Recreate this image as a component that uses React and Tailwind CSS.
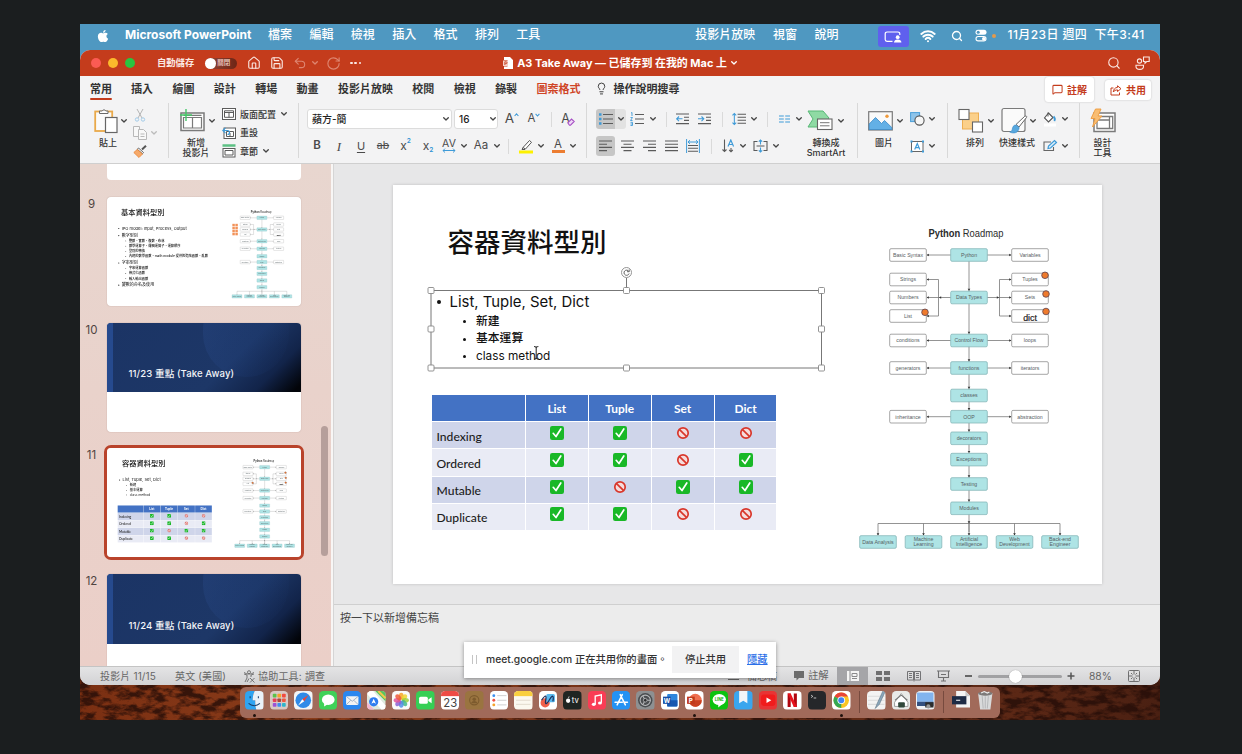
import React from 'react';
import { Wifi, Search, House, Save, Undo2, RotateCw, Lightbulb, MessageSquare } from 'lucide-react';
import { FaApple } from 'react-icons/fa';

const BLUE = '#3f9bd8';
const GREY = '#5b5b5b';

function Chev({ className = 'text-[#444]' }) {
  return (
    <svg width="6" height="4" viewBox="0 0 6 4" className={'shrink-0 ' + className}>
      <path d="M.7.7 3 3 5.3.7" fill="none" stroke="currentColor" strokeWidth="1.3" strokeLinecap="round" strokeLinejoin="round" />
    </svg>
  );
}

function Cell({ className = '', children }) {
  return <div className={'flex h-5 shrink-0 items-center justify-center ' + className}>{children}</div>;
}

const Rule = () => <div className="h-[15px] w-px bg-[#dadada]" />;
const GroupRule = () => <div className="mt-px h-[55px] w-px shrink-0 bg-[#d8d8d8]" />;

/* ---------- menu bar ---------- */

function MenuBar() {
  return (
    <div className="relative flex h-[25px] shrink-0 items-center bg-[#4f98c1] text-[12px] font-medium leading-none text-white">
      <FaApple className="ml-[16px] mt-[-2px] size-[14px]" />
      <span className="ml-[15px] w-[143px] whitespace-nowrap pb-[3px] text-[12px] font-bold">Microsoft PowerPoint</span>
      <div className="flex gap-[17.4px] pb-[3px]">
        {['檔案', '編輯', '檢視', '插入', '格式', '排列', '工具'].map((t) => (
          <span key={t} className="w-6 whitespace-nowrap">{t}</span>
        ))}
      </div>
      <div className="ml-[155px] flex gap-[17.6px] whitespace-nowrap pb-[3px]">
        <span>投影片放映</span>
        <span>視窗</span>
        <span>說明</span>
      </div>
      <div className="ml-[39px] flex h-[21px] w-[31px] items-center justify-center rounded-[3px] bg-[#5f60ee]">
        <svg width="18" height="12" viewBox="0 0 18 12">
          <path d="M8.5 10.3H3A1.8 1.8 0 0 1 1.2 8.500V2.800A1.800 1.800 0 0 1 3 1h11a1.800 1.800 0 0 1 1.800 1.800V4" fill="none" stroke="#fff" strokeWidth="1.200" />
          <circle cx="13.700" cy="6.200" r="1.900" fill="#fff" />
          <path d="M10 11.500c0-2 1.600-3 3.700-3s3.700 1 3.700 3z" fill="#fff" />
        </svg>
      </div>
      <Wifi className="ml-[11px] mt-[-2px] size-[16px]" strokeWidth={3} />
      <Search className="ml-[15px] mt-[-2px] size-[12px]" strokeWidth={2.6} />
      <svg width="12" height="13" viewBox="0 0 12 13" className="ml-[12px] mt-[-2px]">
        <rect x=".5" y=".8" width="11" height="5" rx="2.500" fill="#fff" />
        <circle cx="3.200" cy="3.300" r="1.500" fill="#4f97c1" />
        <rect x="1" y="7.500" width="10" height="4.400" rx="2.200" fill="none" stroke="#fff" strokeWidth="1.100" />
        <circle cx="8.800" cy="9.700" r="1.800" fill="#fff" />
      </svg>
      <div className="ml-[5px] mt-[-2px] size-[4px] rounded-full bg-[#e29a4c]" />
      <span className="ml-[12px] whitespace-nowrap pb-[3px] text-[12px] tracking-[0.4px]">11月23日 週四&nbsp; 下午3:41</span>
    </div>
  );
}

/* ---------- title bar ---------- */

function TitleBar() {
  return (
    <div className="flex h-[26px] shrink-0 items-center bg-[#c43c1c] leading-none text-[#fbe9e4]">
      <div className="ml-[11px] flex gap-[7px]">
        <i className="size-[10px] rounded-full bg-[#fb5b53]" />
        <i className="size-[10px] rounded-full bg-[#fcb92c]" />
        <i className="size-[10px] rounded-full bg-[#29c53f]" />
      </div>
      <span className="ml-[22px] whitespace-nowrap text-[9.3px] font-semibold">自動儲存</span>
      <div className="ml-[11px] flex h-[11px] w-[32px] items-center rounded-full bg-gradient-to-r from-[#94493a] to-[#6f2515]">
        <i className="size-[11px] rounded-full bg-white" />
        <span className="ml-[1px] whitespace-nowrap text-[6.500px] font-medium text-[#f0cfc7]">關閉</span>
      </div>
      <House className="ml-[10px] size-[14px]" strokeWidth={1.9} />
      <Save className="ml-[9px] size-[14px]" strokeWidth={1.9} />
      <Undo2 className="ml-[9px] size-[14px] text-[#de8570]" strokeWidth={1.900} />
      <Chev className="ml-[5px] text-[#de8570]" />
      <RotateCw className="ml-[8px] size-[15px] text-[#de8570]" strokeWidth={1.800} />
      <span className="ml-[9px] flex gap-[1.600px]">
        <i className="size-[2.600px] rounded-full bg-[#fbe9e4]" />
        <i className="size-[2.600px] rounded-full bg-[#fbe9e4]" />
        <i className="size-[2.600px] rounded-full bg-[#fbe9e4]" />
      </span>
      <svg width="10" height="12" viewBox="0 0 10 12" className="ml-[142px]">
        <path d="M2 0h5l3 3v9H1V9.500h3.500V3H1V0z" fill="#fff" />
        <path d="M0 3.500h5v5.500H0z" fill="#f6d3ca" />
        <path d="M1.800 8V4.800h1.300a.9.9 0 0 1 0 1.900H2" fill="none" stroke="#c43c1c" strokeWidth=".8" />
      </svg>
      <span className="ml-[4px] w-[213px] whitespace-nowrap text-[10.950px] font-bold text-white">A3 Take Away — 已儲存到 在我的 Mac 上</span>
      <Chev className="ml-[1px] text-white" />
      <div className="flex-1" />
      <Search className="size-[14px]" strokeWidth={1.900} />
      <svg width="15" height="14" viewBox="0 0 15 14" className="ml-[14px] mr-[10px]" fill="none" stroke="currentColor" strokeWidth="1.100">
        <circle cx="4.500" cy="5" r="2.100" />
        <path d="M1 9.200h7.500v1.300c0 1.700-1.600 2.900-3.700 2.900S1 12.200 1 10.500z" />
        <path d="M8.500 1h5.700v4.500h-2.500L10 7.200V5.500H8.500z" />
      </svg>
    </div>
  );
}

/* ---------- ribbon ---------- */

function Tabs() {
  return (
    <div className="flex h-[26px] shrink-0 items-start text-[11px] font-semibold leading-none text-[#333]">
      <div className="ml-[10px] flex h-[24px] w-[22px] flex-col justify-between whitespace-nowrap pt-[8px]">
        <span>常用</span>
        <i className="h-[2px] w-[22px] rounded bg-[#c43c1c]" />
      </div>
      <div className="ml-[19px] flex gap-[19.400px] whitespace-nowrap pt-[8px]">
        {['插入', '繪圖', '設計', '轉場', '動畫', '投影片放映', '校閱', '檢視', '錄製'].map((t) => <span key={t}>{t}</span>)}
        <span className="text-[#cf4526]">圖案格式</span>
      </div>
      <Lightbulb className="ml-[14px] mt-[6px] size-[13px]" strokeWidth={1.700} />
      <span className="ml-[6px] whitespace-nowrap pt-[8px]">操作說明搜尋</span>
      <div className="flex-1" />
      <div className="mt-px flex h-[25px] w-[49px] items-center justify-center gap-[4px] rounded-[3px] bg-white text-[10px] text-[#c43c1c] shadow-[0_0_2px_rgba(0,0,0,.22)]">
        <MessageSquare className="size-[11px]" strokeWidth={2.200} />
        註解
      </div>
      <div className="ml-[11px] mr-[9px] mt-[4px] flex h-[20px] w-[46px] items-center justify-center gap-[4px] rounded-[3px] bg-white text-[10px] text-[#c43c1c] shadow-[0_0_2px_rgba(0,0,0,.22)]">
        <svg width="12" height="11" viewBox="0 0 12 11" fill="none" stroke="currentColor" strokeWidth="1" strokeLinejoin="round">
          <path d="M3.500 3H1v7h8.500V7.500" />
          <path d="M7.500.8 11 3.700 7.500 6.500V4.900C5.500 4.900 4.300 5.600 3.300 7c.2-2.500 1.500-4.400 4.200-4.600z" />
        </svg>
        共用
      </div>
    </div>
  );
}

function BigButton({ icon, chevron = true, lines, className, rowClass = '', labelClass }) {
  return (
    <div className={'shrink-0 ' + className}>
      <div className={'flex h-[37px] items-center justify-between ' + rowClass}>
        {icon}
        {chevron && <Chev />}
      </div>
      <div className={'-mt-px whitespace-nowrap text-center text-[9px] font-medium leading-[10px] text-[#333] ' + labelClass}>
        {lines.map((l) => <div key={l}>{l}</div>)}
      </div>
    </div>
  );
}

const PasteIcon = () => (
  <svg width="24" height="27" viewBox="0 0 24 27" className="mr-[-1px]">
    <rect x="1.200" y="4.500" width="17" height="19.500" fill="#fbfbfb" stroke="#e9a94a" strokeWidth="1.800" />
    <path d="M5.500 6.500V4h2.700a2 2 0 0 1 3.600 0H14v2.500z" fill="#fff" stroke="#6a6a6a" />
    <rect x="11.500" y="10.500" width="11.500" height="15" fill="#fff" stroke="#666" strokeWidth="1.200" />
  </svg>
);
const NewSlideIcon = () => (
  <svg width="25" height="23" viewBox="0 0 25 23">
    <rect x="1" y="4" width="23" height="17.500" fill="#fff" stroke="#7a7a7a" strokeWidth="1.500" />
    <path d="M3.500 8.500h18v10.500h-18zM12.500 8.500v10.500M3.500 6.300h18" fill="none" stroke="#7a7a7a" strokeWidth="1.200" />
    <path d="M6 0v12M0 6h12" stroke="#44c767" strokeWidth="1.400" />
  </svg>
);
const LayoutIcon = () => (
  <svg width="14" height="12" viewBox="0 0 14 12" fill="none" stroke={GREY} strokeWidth="1"><rect x=".5" y=".5" width="13" height="11" fill="#fff" /><path d="M2.500 2.800h9v6.500h-9zM7 4.500v4.800M2.500 4.500h9" /></svg>
);
const ResetIcon = () => (
  <svg width="14" height="12" viewBox="0 0 14 12" fill="none" stroke={GREY} strokeWidth="1"><rect x="2" y="1" width="11.500" height="10.500" fill="#fff" /><path d="M4.500 4.500h7v5h-7zM8 6v3.500" /><path d="M1 3.500h4.500a2 2 0 0 1 0 4M3.500.8.8 3.500l2.700 2.600" stroke={BLUE} strokeWidth="1.200" /></svg>
);
const SectionIcon = () => (
  <svg width="14" height="14" viewBox="0 0 14 14" fill="none" stroke={GREY} strokeWidth="1"><path d="M.5 1.500h13" stroke="#5cc184" strokeWidth="2.400" /><rect x="1" y="4.500" width="12" height="8.500" fill="#fff" /><path d="M3 6.500h8v4.500H3z" /></svg>
);
const SmartArtIcon = () => (
  <svg width="26" height="22" viewBox="0 0 26 22">
    <path d="M1 1h15l6 7-6 9H1l5-8z" fill="#8fdaa4" stroke="#58b877" />
    <rect x="10.500" y="9" width="14.500" height="10.500" fill="#fff" stroke="#666" strokeWidth="1.100" />
    <path d="M13 12.700h9.500M13 15.800h9.500" stroke="#777" />
  </svg>
);
const PictureIcon = () => (
  <svg width="25" height="20" viewBox="0 0 25 20">
    <rect x=".7" y=".7" width="23.600" height="18.300" fill="#fafafa" stroke="#7a7a7a" strokeWidth="1.200" />
    <path d="M1.200 13 7.500 6.500l6 6L16.500 9.500l7.300 7v2H1.200z" fill="#63b0e6" stroke="#3a89c8" strokeWidth=".8" />
    <circle cx="19" cy="5.300" r="1.700" fill="#f09a3c" />
  </svg>
);
const ArrangeIcon = () => (
  <svg width="26" height="26" viewBox="0 0 26 26">
    <rect x="4.500" y="5" width="16" height="16" fill="#fbd08a" stroke="#edae52" />
    <rect x="1" y="1.500" width="10" height="10" fill="#fff" stroke="#666" strokeWidth="1.100" />
    <rect x="14.500" y="14" width="10" height="10" fill="#fff" stroke="#666" strokeWidth="1.100" />
  </svg>
);
const QuickStyleIcon = () => (
  <svg width="27" height="27" viewBox="0 0 27 27">
    <rect x="1" y="1.500" width="23" height="23" rx="2" fill="#fafafa" stroke="#7a7a7a" strokeWidth="1.200" />
    <path d="M25.500 10.500 18 20l-3-2.500 8.500-8c1.500-1 3 0 2 1z" fill="#fff" stroke="#666" />
    <path d="M15.200 18c-3 0-3.500 2-4 4.500-.3 1.500-1.500 2-2.500 2.500 4 2 9 1 9.500-4.500z" fill="#57a8de" stroke="#3a89c8" strokeWidth=".6" />
  </svg>
);
const DesignIcon = () => (
  <svg width="26" height="26" viewBox="0 0 26 26" className="mr-[-1px] shrink-0">
    <rect x="4" y="5" width="21" height="18.500" fill="#fff" stroke="#7a7a7a" strokeWidth="1.500" />
    <path d="M7 8.500h15M7 12v8.500h12.500V12zM19.500 8.500v12h3.200v-12z" fill="none" stroke="#7a7a7a" strokeWidth="1.300" />
    <path d="M5.500 1h5.500L8 8h4L2.500 19l2.500-8.500H1z" fill="#f9bd72" stroke="#ee9b3c" strokeWidth=".9" />
  </svg>
);

function Lines({ rows, children, w = 14, h = 14 }) {
  return (
    <svg width={w} height={h} viewBox={`0 0 ${w} ${h}`} fill="none">
      {rows.map(([x1, x2, y], i) => <path key={i} d={`M${x1} ${y}H${x2}`} stroke={GREY} strokeWidth="1.100" />)}
      {children}
    </svg>
  );
}

function Ribbon() {
  return (
    <div className="flex h-[62px] shrink-0 border-b border-[#cfcfcf] leading-none text-[#4a4a4a]">
      <div className="flex w-[88px] shrink-0 pl-[14px]">
        <BigButton icon={<PasteIcon />} lines={['貼上']} className="w-[33px]" labelClass="w-[28px]" />
        <div className="ml-[6px] flex flex-col pt-[4px]">
          <div className="flex h-[18px] items-center">
            <svg width="14" height="13" viewBox="0 0 14 13" fill="none" strokeWidth="1"><path d="M4 0l5 9M10 0 5 9" stroke="#b5b5b5" /><circle cx="4" cy="10.500" r="1.700" stroke="#a3cbe8" /><circle cx="10" cy="10.500" r="1.700" stroke="#a3cbe8" /></svg>
          </div>
          <div className="flex h-[18px] items-center">
            <svg width="14" height="14" viewBox="0 0 14 14" fill="#f8f8f8" stroke="#b8b8b8"><path d="M.5.500h6v10h-6z" /><path d="M5.500 3.500h5l3 3v7h-8zM7.500 8h4M7.500 10.500h4" /></svg>
            <span className="flex w-[14px] justify-center"><Chev className="text-[#bbb]" /></span>
          </div>
          <div className="flex h-[18px] items-center">
            <svg width="14" height="13" viewBox="0 0 14 13"><path d="M13 .8 9 4.500" stroke="#555" strokeWidth="2" /><path d="M5.500 3l5 4.500-1 1.200L4.300 4.300z" fill="#fff" stroke="#555" strokeWidth=".9" /><path d="M4.300 4.500 9.500 9 6 12.500.8 7.500z" fill="#f6a96a" stroke="#e88433" strokeWidth=".8" /></svg>
          </div>
        </div>
      </div>
      <GroupRule />
      <div className="flex w-[129px] shrink-0 pl-[11px]">
        <BigButton icon={<NewSlideIcon />} lines={['新增', '投影片']} className="w-[35px]" labelClass="w-[32px]" />
        <div className="ml-[7px] flex flex-col whitespace-nowrap pt-[3px] text-[9px] font-medium text-[#333]">
          <div className="flex h-[18.500px] items-center"><LayoutIcon /><span className="ml-[4px]">版面配置</span><Chev className="ml-[5px] text-[#444]" /></div>
          <div className="flex h-[18.500px] items-center"><ResetIcon /><span className="ml-[4px]">重設</span></div>
          <div className="flex h-[18.500px] items-center"><SectionIcon /><span className="ml-[4px]">章節</span><Chev className="ml-[5px] text-[#444]" /></div>
        </div>
      </div>
      <GroupRule />
      <div className="flex w-[287px] shrink-0 flex-col gap-[7px] pt-[7px]">
        <div className="flex h-5 items-center pl-[8px] text-[#4a4a4a]">
          <div className="flex h-5 w-[145px] items-center justify-between rounded-[3px] border border-[#dcdcdc] bg-white pl-[4px] pr-[2px] text-[10px] font-medium text-[#222]">蘋方-簡<Chev /></div>
          <div className="ml-[2px] flex h-5 w-[44px] items-center justify-between rounded-[3px] border border-[#dcdcdc] bg-white pl-[4px] pr-[1px] text-[10px] font-medium text-[#222]">16<Chev /></div>
          <Cell className="ml-[2px] w-6 text-[13.500px]">A<svg width="5" height="4" viewBox="0 0 5 4" className="mb-[9px]"><path d="M.6 3 2.500.9 4.400 3" fill="none" stroke={BLUE} strokeWidth="1.100" /></svg></Cell>
          <Cell className="w-5 text-[11.500px]">A<svg width="5" height="4" viewBox="0 0 5 4" className="mb-[9px]"><path d="M.6.9 2.500 3 4.400.9" fill="none" stroke={BLUE} strokeWidth="1.100" /></svg></Cell>
          <Cell className="w-[14px]"><Rule /></Cell>
          <Cell className="w-5 text-[12.500px]">A<svg width="8" height="8" viewBox="0 0 8 8" className="-ml-[3px] mt-[6px]"><path d="M.8 4.800 4.500 1l2.700 2.500-3.700 3.700H2.500z" fill="#efd9f7" stroke="#a64fc4" strokeWidth="1.100" /></svg></Cell>
        </div>
        <div className="flex h-5 items-center pl-[7px]">
          <Cell className="w-[22px] text-[11.500px] font-semibold">B</Cell>
          <Cell className="w-[22px] font-['Liberation_Serif',serif] text-[13px] italic">I</Cell>
          <Cell className="w-[22px] text-[11px] underline underline-offset-2">U</Cell>
          <Cell className="w-[22px] text-[10.500px] line-through">ab</Cell>
          <Cell className="w-[23px] text-[12px]">x<span className="mb-[9px] text-[6.500px] font-semibold text-[#2b8fd2]">2</span></Cell>
          <Cell className="w-[22px] text-[12px]">x<span className="mt-[9px] text-[6.500px] font-semibold text-[#2b8fd2]">2</span></Cell>
          <Cell className="w-[20px] flex-col text-[10.500px]">AV<svg width="14" height="5" viewBox="0 0 14 5" className="-mt-px"><path d="M1 2.500h12M3 .6l-2 2 2 1.900M11 .6l2 2-2 1.900" fill="none" stroke={BLUE} /></svg></Cell>
          <Cell className="w-[9px]"><Chev /></Cell>
          <Cell className="w-[26px] text-[11.500px]">Aa</Cell>
          <Cell className="w-[5px]"><Chev /></Cell>
          <Cell className="w-[18px]"><Rule /></Cell>
          <Cell className="w-[18px]">
            <svg width="14" height="15" viewBox="0 0 14 15"><path d="M4 8.500 10.500 1.500l2 1.800L6.500 10zM4 8.500 3 10.500h3" fill="#fff" stroke="#555" /><rect x="0" y="11.500" width="14" height="3" fill="#fdf100" /></svg>
          </Cell>
          <Cell className="w-[12px]"><Chev /></Cell>
          <Cell className="w-[22px] flex-col text-[11.500px] leading-[11px]">A<i className="h-[3px] w-[13px] bg-[#ec7d31]" /></Cell>
          <Cell className="w-[8px]"><Chev /></Cell>
        </div>
      </div>
      <GroupRule />
      <div className="flex w-[270px] shrink-0">
        <div className="flex w-[217px] shrink-0 flex-col gap-[7px] pt-[7px]">
          <div className="flex h-5 items-center pl-[9px]">
            <Cell className="w-[19px] rounded-l-[3px] bg-[#c6c6c6]">
              <Lines rows={[[4, 14, 2.500], [4, 14, 7], [4, 14, 11.500]]}>
                <path d="M0 2.500h2.500M0 7h2.500M0 11.500h2.500" stroke={BLUE} strokeWidth="2.400" />
              </Lines>
            </Cell>
            <Cell className="w-[11px] rounded-r-[3px] bg-[#e2e2e2]"><Chev /></Cell>
            <Cell className="w-[22px]">
              <Lines rows={[[5, 14, 2.500], [5, 14, 7], [5, 14, 11.500]]}>
                <path d="M1 1l1-.5v3.500M.5 5.500h2l-2 3h2M.5 10.300h2v3.200h-2M.5 12h2" stroke={BLUE} strokeWidth=".9" />
              </Lines>
            </Cell>
            <Cell className="w-[10px]"><Chev /></Cell>
            <Cell className="w-[16px]"><Rule /></Cell>
            <Cell className="w-[16px]"><Lines w={13} rows={[[0, 13, 2], [8, 13, 5.200], [8, 13, 8.400], [0, 13, 11.600]]}><path d="M6.500 6.800h-6M3 4.500.700 6.800 3 9.100" stroke={BLUE} strokeWidth="1.100" /></Lines></Cell>
            <Cell className="ml-[6px] w-[16px]"><Lines w={13} rows={[[0, 13, 2], [8, 13, 5.200], [8, 13, 8.400], [0, 13, 11.600]]}><path d="M0 6.800h6M3.500 4.500 5.800 6.800 3.500 9.100" stroke={BLUE} strokeWidth="1.100" /></Lines></Cell>
            <Cell className="w-[20px]"><Rule /></Cell>
            <Cell className="w-[14px]"><Lines w={15} rows={[[6, 15, 2], [6, 15, 5.200], [6, 15, 8.400], [6, 15, 11.600]]}><path d="M2.500 1v12M.5 3.200l2-2.200 2 2.200M.5 10.800l2 2.200 2-2.200" stroke={BLUE} strokeWidth="1.100" /></Lines></Cell>
            <Cell className="w-[16px]"><Chev /></Cell>
            <Cell className="w-[10px]"><Rule /></Cell>
            <Cell className="w-[24px]"><svg width="11" height="8" viewBox="0 0 11 8"><path d="M0 1h4.800M6.200 1H11M0 4h4.800M6.200 4H11M0 7h4.800M6.200 7H11" stroke={BLUE} strokeWidth="1.100" /></svg></Cell>
            <Cell className="w-[6px]"><Chev /></Cell>
          </div>
          <div className="flex h-5 items-center pl-[9px]">
            <Cell className="w-[19px] rounded-[3px] bg-[#c6c6c6]"><Lines w={13} rows={[[0, 13, 2], [0, 8, 5.200], [0, 13, 8.400], [0, 8, 11.600]]} /></Cell>
            <Cell className="ml-px w-[22px]"><Lines w={13} rows={[[0, 13, 2], [2.500, 10.500, 5.200], [0, 13, 8.400], [2.500, 10.500, 11.600]]} /></Cell>
            <Cell className="w-[22px]"><Lines w={13} rows={[[0, 13, 2], [5, 13, 5.200], [0, 13, 8.400], [5, 13, 11.600]]} /></Cell>
            <Cell className="w-[22px]"><Lines w={13} rows={[[0, 13, 2], [0, 13, 5.200], [0, 13, 8.400], [0, 13, 11.600]]} /></Cell>
            <Cell className="w-[22px]"><Lines w={14} rows={[[2, 12, 6.500], [2, 12, 9.300], [2, 12, 12.200]]}><path d="M.6 0v14M13.400 0v14M2 3h10M4 1.200 2 3l2 1.800M10 1.200 12 3l-2 1.800" stroke={BLUE} /></Lines></Cell>
            <Cell className="w-[14px]"><Rule /></Cell>
            <Cell className="w-[20px]">
              <svg width="12" height="14" viewBox="0 0 12 14" fill="none"><path d="M2.500.500v12M.5 10.500l2 2 2-2M9 9v3.500M7.200 11l1.800 1.800L10.800 11" stroke={GREY} strokeWidth="1.100" /><path d="M6 7.500 8.800 1l2.800 6.500M7 5.500h3.600" stroke={BLUE} strokeWidth="1.200" /></svg>
            </Cell>
            <Cell className="w-[10px]"><Chev /></Cell>
            <Cell className="w-[24px]">
              <svg width="15" height="14" viewBox="0 0 15 14" fill="none"><path d="M4.500 2.500H1v9h3.500M10.500 2.500H14v9h-3.500M3.500 7h8" stroke={GREY} strokeWidth="1.100" /><path d="M7.500 1v4.500M5.800 2.700 7.500 1l1.700 1.700M7.500 13V8.500M5.800 11.300 7.500 13l1.700-1.700" stroke={BLUE} strokeWidth="1.100" /></svg>
            </Cell>
            <Cell className="w-[7px]"><Chev /></Cell>
          </div>
        </div>
        <BigButton icon={<SmartArtIcon />} lines={['轉換成', 'SmartArt']} className="w-[40px]" rowClass="pl-[3px]" labelClass="w-[44px]" />
      </div>
      <GroupRule />
      <div className="flex w-[89px] shrink-0 pl-[10px]">
        <BigButton icon={<PictureIcon />} lines={['圖片']} className="w-[35px]" labelClass="w-[32px]" />
        <div className="ml-[7px] flex flex-col gap-[7px] pt-[7px]">
          <div className="flex h-5 items-center">
            <svg width="15" height="14" viewBox="0 0 15 14"><rect x=".6" y=".6" width="9" height="9" fill="#8ec4ea" stroke="#4b9fd9" /><circle cx="9.500" cy="8.500" r="4.600" fill="#f6f6f6" stroke="#555" strokeWidth="1.100" /></svg>
            <Cell className="w-[14px]"><Chev /></Cell>
          </div>
          <div className="flex h-5 items-center">
            <svg width="15" height="13" viewBox="0 0 15 13" fill="none"><rect x="1.500" y="1.500" width="11.500" height="10" fill="#fff" stroke="#666" /><path d="M4.700 9.500 7.300 3.500l2.500 6M5.500 7.600h3.500" stroke={BLUE} strokeWidth="1.200" /><path d="M.5.500h2v2h-2zM12 .5h2v2h-2zM.5 10.500h2v2h-2zM12 10.500h2v2h-2z" fill={BLUE} /></svg>
            <Cell className="w-[14px]"><Chev /></Cell>
          </div>
        </div>
      </div>
      <GroupRule />
      <div className="flex w-[131px] shrink-0 pl-[10px]">
        <BigButton icon={<ArrangeIcon />} lines={['排列']} className="w-[36px]" labelClass="w-[34px]" />
        <BigButton icon={<QuickStyleIcon />} lines={['快速樣式']} className="ml-[5px] w-[37px]" rowClass="pl-[2px]" labelClass="w-[36px]" />
        <div className="ml-[6px] flex flex-col gap-[7px] pt-[7px]">
          <div className="flex h-5 items-center">
            <svg width="16" height="16" viewBox="0 0 16 16"><rect x="2" y="12.500" width="12" height="3" fill="#fff" /><path d="M6.500 2 11 6.500 6.500 11 2.500 7z" fill="#fff" stroke="#555" strokeWidth="1.100" /><path d="M6 1.500v4" stroke="#555" /><path d="M11.500 5.500c1.500 1.500 1.800 3 .8 4.500" fill="none" stroke={BLUE} strokeWidth="1.800" /></svg>
            <Cell className="w-[14px]"><Chev /></Cell>
          </div>
          <div className="flex h-5 items-center">
            <svg width="16" height="14" viewBox="0 0 16 14" fill="none"><path d="M9 3H2v8.500h9.500V8" stroke="#666" strokeWidth="1.100" /><path d="M6 9.500 6.500 7 12.500 1.500l2 2L8.500 9z" fill="#d8ecf9" stroke={BLUE} strokeWidth="1.200" /></svg>
            <Cell className="w-[14px]"><Chev /></Cell>
          </div>
        </div>
      </div>
      <GroupRule />
      <div className="flex pl-[10px]">
        <BigButton icon={<DesignIcon />} chevron={false} lines={['設計', '工具']} className="w-[25px]" labelClass="w-[25px]" />
      </div>
    </div>
  );
}

/* ---------- slide content ---------- */

const SPINE = [
  [255, 'Python'], [297.5, 'Data Types'], [340.500, 'Control Flow'], [368, 'functions'], [395.500, 'classes'], [416.700, 'OOP'],
  [438.300, 'decorators'], [459.600, 'Exceptions'], [484, 'Testing'], [508.300, 'Modules'],
];
const SIDES = [
  [908, 255, 'Basic Syntax'], [1030, 255, 'Variables'],
  [908, 279.500, 'Strings'], [908, 297.500, 'Numbers'], [908, 316, 'List'],
  [1030, 279.500, 'Tuples'], [1030, 297.500, 'Sets'], [1030, 316, 'dict'],
  [908, 340.500, 'conditions'], [1030, 340.500, 'loops'],
  [908, 368, 'generators'], [1030, 368, 'iterators'],
  [908, 416.700, 'inheritance'], [1030, 416.700, 'abstraction'],
];
const LEAVES = [
  [878, ['Data Analysis']], [923.500, ['Machine', 'Learning']], [969, ['Artificial', 'Intelligence']],
  [1014.500, ['Web', 'Development']], [1060, ['Back-end', 'Engineer']],
];

function Head({ x, y, dir }) {
  const d = { l: 'M0 0l2.200-1.300v2.600z', r: 'M0 0l-2.200-1.300v2.600z', d: 'M0 0l-1.300-2.200h2.600z' }[dir];
  return <path d={d} transform={`translate(${x} ${y})`} fill="#333" />;
}

function Node({ x, y, teal, lines }) {
  const big = lines[0] === 'dict';
  return (
    <g>
      <rect x={x - 18.300} y={y - 6.300} width="36.600" height="12.600" rx="1.300" fill={teal ? '#aee4e5' : '#fff'} stroke={teal ? '#86b7b9' : '#8f8f8f'} strokeWidth=".8" />
      {lines.map((t, i) => (
        <text key={t} x={x} y={y + (big ? 4.500 : 1.800) + (lines.length > 1 ? i * 5 - 2.600 : 0)} fontSize={big ? 8.800 : 5.200} textAnchor="middle" fill={big ? '#222' : '#566064'} stroke={big ? '#222' : 'none'} strokeWidth=".2">{t}</text>
      ))}
    </g>
  );
}

function Roadmap({ dots }) {
  return (
    <svg width="230" height="332" viewBox="855 222 230 332" fontFamily="'Liberation Sans', sans-serif">
      <text x="966" y="237.300" fontSize="10" textLength="75" lengthAdjust="spacingAndGlyphs" textAnchor="middle" fill="#2c2c2c"><tspan fontWeight="700">Python</tspan> Roadmap</text>
      <g stroke="#787878" strokeWidth=".8" fill="none">
        <path d="M969 255V532M927 255h84M927 297.500h84M927 340.500h84M927 368h84M927 416.700h84" />
        <path d="M927 279.500h11.500V316H927M1011 279.500h-11.500V316h11.500" />
        <path d="M878 535V523.500H1060V535M923.500 523.500V535M1014.500 523.500V535M969 523V535" />
      </g>
      {SIDES.map(([x, y]) => <Head key={x + '-' + y} x={x < 969 ? 926.600 : 1011.400} y={y} dir={x < 969 ? 'l' : 'r'} />)}
      <Head x={939} y={297.500} dir="l" />
      <Head x={999} y={297.500} dir="r" />
      {SPINE.slice(1).map(([y]) => <Head key={y} x={969} y={y - 6.500} dir="d" />)}
      <Head x={969} y={523.500} dir="d" />
      {LEAVES.map(([x]) => <Head key={x} x={x} y={535.500} dir="d" />)}
      {SIDES.map(([x, y, t]) => <Node key={t} x={x} y={y} lines={[t]} />)}
      {SPINE.map(([y, t]) => <Node key={t} x={969} y={y} teal lines={[t]} />)}
      {LEAVES.map(([x, l]) => <Node key={l[0]} x={x} y={542} teal lines={l} />)}
      {dots && [[1045, 275.300], [1046, 294], [1046, 311.500], [925, 312.300]].map(([x, y]) => (
        <circle key={x + '-' + y} cx={x} cy={y} r="3.300" fill="#ee7a2c" stroke="#5d4350" strokeWidth=".8" />
      ))}
    </svg>
  );
}

const Yes = () => (
  <svg width="14" height="14" viewBox="0 0 14 14"><rect width="14" height="14" rx="2.200" fill="#19b827" /><path d="M3.200 7.300 6 10.500 10.800 3" fill="none" stroke="#fff" strokeWidth="1.700" strokeLinecap="round" strokeLinejoin="round" /></svg>
);
const No = () => (
  <svg width="14" height="14" viewBox="0 0 14 14"><circle cx="7" cy="7" r="5.200" fill="#f5dcdc" stroke="#d9372b" strokeWidth="1.700" /><path d="M3.300 3.300l7.400 7.400" stroke="#d9372b" strokeWidth="1.700" /></svg>
);

const TABLE = [
  ['Indexing', 1, 1, 0, 0],
  ['Ordered', 1, 1, 0, 1],
  ['Mutable', 1, 0, 1, 1],
  ['Duplicate', 1, 1, 0, 0],
];

function Table() {
  return (
    <div className="grid w-[345px] grid-cols-[93.400px_61.900px_61.900px_61.900px_61.900px] gap-x-px font-['Lato','Open_Sans',sans-serif] text-[12.100px] font-medium leading-none text-[#1c1c1c]">
      {['', 'List', 'Tuple', 'Set', 'Dict'].map((h) => (
        <div key={h} className="flex h-[26px] items-center justify-center bg-[#4372c4] pt-[2px] text-[11.900px] font-bold text-white">{h}</div>
      ))}
      {TABLE.map(([name, ...vals], r) => (
        <React.Fragment key={name}>
          <div className={'mt-px flex h-[26.200px] items-end pb-[5.500px] pl-[5px] ' + (r % 2 ? 'bg-[#e9ebf5]' : 'bg-[#cfd5ea]')}>{name}</div>
          {vals.map((v, i) => (
            <div key={i} className={'mt-px flex h-[26.200px] justify-center pt-[3.500px] ' + (r % 2 ? 'bg-[#e9ebf5]' : 'bg-[#cfd5ea]')}>{v ? <Yes /> : <No />}</div>
          ))}
        </React.Fragment>
      ))}
    </div>
  );
}

function Bullet({ sub, children }) {
  return (
    <div className={'flex items-center whitespace-nowrap ' + (sub ? 'h-[17.800px] pl-[32px] text-[11.800px] font-medium' : 'h-[21px] pl-[6px] text-[14.900px]')}>
      <i className={'rounded-full bg-[#111] ' + (sub ? 'mr-[10px] size-[3px]' : 'mr-[8.500px] size-[4px]')} />
      {children}
    </div>
  );
}

function ContainerSlide({ selected }) {
  return (
    <div className="relative h-[399px] w-[709px] bg-white text-[#111]">
      <div className="absolute left-[54.500px] top-[42px] whitespace-nowrap text-[26.500px] font-medium leading-[30px]">容器資料型別</div>
      <div className="absolute left-[38px] top-[105px] pt-[1.500px]">
        <Bullet>List, Tuple, Set, Dict</Bullet>
        <Bullet sub>新建</Bullet>
        <Bullet sub>基本運算</Bullet>
        <Bullet sub><span className="font-normal">class method</span></Bullet>
      </div>
      {selected && (
        <svg width="402" height="106" viewBox="0 0 402 106" className="absolute left-[32px] top-[81px]">
          <path d="M6 24.500h390.500v77.500H6zM201.500 12v10" fill="none" stroke="#777" />
          {[[6, 24.500], [201.500, 24.500], [396.500, 24.500], [6, 63], [396.500, 63], [6, 102], [201.500, 102], [396.500, 102]].map(([x, y]) => (
            <rect key={x + '-' + y} x={x - 3} y={y - 3} width="6" height="6" rx="1" fill="#fff" stroke="#888" strokeWidth=".9" />
          ))}
          <circle cx="201.500" cy="6.500" r="5" fill="#fff" stroke="#888" strokeWidth=".9" />
          <path d="M203.800 5.300a2.600 2.600 0 1 0 .3 2.200M204.200 3.500v2.200H202" fill="none" stroke="#555" strokeWidth=".9" />
          <path d="M109 80.500c1.500 0 2.200.5 2.200 1.500 0-1 .7-1.500 2.200-1.500M111.200 82v9.500M109 93c1.500 0 2.200-.5 2.200-1.500 0 1 .7 1.500 2.200 1.500" fill="none" stroke="#333" strokeWidth="1.100" />
        </svg>
      )}
      <div className="absolute left-[38.500px] top-[210.300px]"><Table /></div>
      <div className="absolute left-[462px] top-[37px]"><Roadmap dots /></div>
    </div>
  );
}

function BasicSlide() {
  return (
    <div className="relative h-[399px] w-[709px] bg-white text-[#111]">
      <div className="absolute left-[51px] top-[40px] whitespace-nowrap text-[26.500px] font-medium leading-[30px]">基本資料型別</div>
      <div className="absolute left-[35px] top-[104px] flex flex-col gap-y-[1px]">
        <Bullet>IPO model: Input, Process, Output</Bullet>
        <div className="pt-[4px]"><Bullet>數字型別</Bullet></div>
        <Bullet sub>整數、實數、複數、布林</Bullet>
        <Bullet sub>數學運算子、邏輯運算子、運算順序</Bullet>
        <Bullet sub>型別的轉換</Bullet>
        <Bullet sub>內建的數學函數、math module 提供的進階函數、亂數</Bullet>
        <div className="pt-[3px]"><Bullet>字串型別</Bullet></div>
        <Bullet sub>字串運算函數</Bullet>
        <Bullet sub>格式化函數</Bullet>
        <Bullet sub>輸入輸出函數</Bullet>
        <div className="pt-[3px]"><Bullet>變數的命名及使用</Bullet></div>
      </div>
      <div className="absolute left-[452px] top-[43px]"><Roadmap /></div>
      <div className="absolute left-[458px] top-[98px] grid grid-cols-2 gap-[2px]">
        {[0, 1, 2, 3, 4, 5, 6, 7].map((i) => <i key={i} className="h-[9px] w-[9px] bg-[#f29258]" />)}
      </div>
    </div>
  );
}

function TitleSlide({ text }) {
  return (
    <div className="h-[109px] w-[194px] bg-white">
      <div className="relative flex h-[69.500px] items-end overflow-hidden bg-[linear-gradient(135deg,#1b3465_0%,#1d3767_62%,#12244a_82%,#020409_97%)]">
        <i className="absolute inset-y-0 left-0 w-[6px] bg-[#264a8e]" />
        <i className="absolute -top-[36px] left-[96px] h-[90px] w-[86px] rounded-full bg-[linear-gradient(110deg,#2b4c8a66,#1f3f7d33_60%,transparent)]" />
        <span className="relative mb-[12px] ml-[21.500px] whitespace-nowrap text-[9.600px] font-medium leading-[12px] tracking-[0.080px] text-[#f2f4f8]">{text}</span>
      </div>
    </div>
  );
}

function Thumb({ n, active, children }) {
  return (
    <div className="mb-[16.700px] flex h-[109px] shrink-0">
      <span className="w-[27px] pr-[4px] pt-px text-center text-[11.500px] leading-[12px] text-[#4f4441]">{n}</span>
      <div className={'h-[109px] w-[194px] overflow-hidden rounded-[4px] ' + (active ? 'outline-[3px] outline-[#b9432b]' : 'shadow-[0_0_1px_rgba(90,50,40,.5)]')}>{children}</div>
    </div>
  );
}

const Mini = ({ children }) => <div className="size-0"><div className="h-[399px] w-[709px] origin-top-left scale-[0.2737]">{children}</div></div>;

function SlidePane() {
  return (
    <div className="flex w-[251px] shrink-0 justify-between overflow-hidden bg-[linear-gradient(180deg,#e8d6cf_0%,#e9d2cb_45%,#ebcfc8_100%)]">
      <div className="flex flex-col">
        <div className="mb-[17px] ml-[27px] h-[16px] w-[194px] shrink-0 rounded-b-[4px] bg-white" />
        <Thumb n="9"><Mini><BasicSlide /></Mini></Thumb>
        <Thumb n="10"><TitleSlide text="11/23 重點 (Take Away)" /></Thumb>
        <Thumb n="11" active><Mini><ContainerSlide /></Mini></Thumb>
        <Thumb n="12"><TitleSlide text="11/24 重點 (Take Away)" /></Thumb>
      </div>
      <div className="mr-[3px] mt-[262px] h-[130px] w-[7px] rounded-full bg-[#b69f9b]" />
    </div>
  );
}

/* ---------- status bar ---------- */

function StatusBar() {
  return (
    <div className="flex h-[19px] shrink-0 items-center whitespace-nowrap border-t border-[#c4c4c4] bg-gradient-to-b from-[#e4e4e5] to-[#d2d2d4] text-[10px] leading-none text-[#666]">
      <span className="ml-[20px] w-[75px] shrink-0 pb-px tracking-[0.150px]">投影片 11/15</span>
      <span className="w-[68px] shrink-0 pb-px tracking-[0.150px]">英文 (美國)</span>
      <svg width="12" height="13" viewBox="0 0 12 13" fill="none" stroke="#6a6a6a" strokeWidth=".9" className="mr-[3px] shrink-0">
        <circle cx="6" cy="2.200" r="1.500" /><path d="M1 4l3 1v3l-2 4M11 4 8 5v2M1 2.500 4 4h4l3-1.500M7 8l4.500 4.500M11.500 8 7 12.500M4 12l2-3.500" />
      </svg>
      <span className="w-[470px] shrink-0 pb-px tracking-[0.200px]">協助工具: 調查</span>
      <svg width="11" height="9" viewBox="0 0 11 9"><path d="M0 7.500h11M2 4.500h7" stroke="#666" /></svg>
      <span className="ml-[8px] w-[46px]">備忘稿</span>
      <svg width="12" height="10" viewBox="0 0 12 10"><path d="M1 0h10v7H6L3.500 9.500V7H1z" fill="#6c6c6c" /></svg>
      <span className="ml-[3px] w-[29px] pb-px text-[10.300px]">註解</span>
      <div className="flex h-[19px] w-[31px] items-center justify-center bg-[#a5a5a8]">
        <svg width="12" height="10" viewBox="0 0 12 10"><rect width="12" height="10" fill="#f5f5f5" /><path d="M3 0v10M5 2.500h5v3H5zM5 7.500h5" fill="none" stroke="#8a8a8c" /></svg>
      </div>
      <svg width="14" height="10" viewBox="0 0 14 10" className="ml-[8px]"><path d="M0 0h6v4H0zM8 0h6v4H8zM0 6h6v4H0zM8 6h6v4H8z" fill="#6f6f70" /></svg>
      <svg width="14" height="12" viewBox="0 0 14 12" className="ml-[17px]" fill="none" stroke="#747476"><path d="M.5 1.500h6v8.500h-6zM7.500 1.500h6v8.500h-6zM2 3.500h3M2 5.500h3M2 7.500h3M9 3.500h3M9 5.500h3M9 7.500h3M7 1v10.500" /></svg>
      <svg width="13" height="12" viewBox="0 0 13 12" className="ml-[16px]" fill="none" stroke="#6f6f70" strokeWidth="1.100"><path d="M0 1h13M1.500 1.500v6h10v-6M6.500 7.500V11M4 11h5M4 4.500h5" /></svg>
      <i className="ml-[15px] h-[1.500px] w-[7px] bg-[#666]" />
      <div className="ml-[6px] flex h-[3px] w-[84px] items-center rounded-full bg-[#a1a1a3]">
        <i className="ml-[31px] size-[13px] rounded-full bg-white shadow-[0_0_1px_rgba(0,0,0,.4)]" />
      </div>
      <svg width="8" height="8" viewBox="0 0 8 8" className="ml-[5px]"><path d="M4 .5v7M.5 4h7" stroke="#555" strokeWidth="1.500" /></svg>
      <span className="ml-[14px] w-[39px] text-[10.300px]">88%</span>
      <svg width="12" height="12" viewBox="0 0 12 12" fill="none" stroke="#6f6f70"><rect x=".5" y=".5" width="11" height="11" rx="1" /><path d="M6 1v3.500M6 7.500V11M1 6h3.500M7.500 6H11" /><path d="M3 3l1.500 1.500M9 3 7.500 4.500M3 9l1.500-1.500M9 9 7.500 7.500" /></svg>
    </div>
  );
}

function SharePopup() {
  return (
    <div className="absolute left-[384px] top-[618px] flex h-[36px] w-[312px] items-center whitespace-nowrap bg-white pb-px text-[10.300px] font-medium leading-none text-[#333] shadow-[0_1px_4px_rgba(0,0,0,.4)]">
      <i className="ml-[8px] h-[9px] w-[5px] border-x border-[#c4c4c4]" />
      <span className="ml-[9px] w-[186px]">meet.google.com 正在共用你的畫面。</span>
      <span className="flex h-[27px] w-[67px] items-center justify-center bg-[#f2f2f3] pb-px">停止共用</span>
      <span className="ml-[8px] text-[#2c6fe8] underline underline-offset-1">隱藏</span>
    </div>
  );
}

/* ---------- dock ---------- */

const APPS = {
  finder: <><path d="M0 0h9.500c-1.500 3-2 6-2 9h2.500c0 4 .3 7 1 9H0z" fill="#2fa4f2" /><path d="M9.500 0H18v18h-7c-.7-2-1-5-1-9H7.500c0-3 .5-6 2-9z" fill="#eaf2fa" /><path d="M5 5v2M13 5v2M3.500 12c3 3 8 3 11 0" stroke="#173a66" fill="none" /></>,
  launchpad: <><rect width="18" height="18" fill="#d9c9c4" />{['#5bc24a', '#f6a12b', '#f14b3f', '#e83f56', '#a9493d', '#f0583f', '#9b52d6', '#3f8ef0', '#2fb6c9'].map((c, i) => <rect key={c} x={2.700 + (i % 3) * 4.500} y={2.700 + Math.floor(i / 3) * 4.500} width="3.600" height="3.600" rx=".8" fill={c} />)}</>,
  safari: <><rect width="18" height="18" fill="#f2f4f6" /><circle cx="9" cy="9" r="7.600" fill="#2f8ae8" /><path d="M14 4 10 10 8 8z" fill="#f04438" /><path d="M4 14l4-6 2 2z" fill="#fff" /></>,
  messages: <><rect width="18" height="18" fill="#3fd158" /><ellipse cx="9" cy="8.500" rx="6.200" ry="5" fill="#fff" /><path d="M5 11v4l3.500-2z" fill="#fff" /></>,
  mail: <><rect width="18" height="18" fill="#2b87ef" /><rect x="3" y="5" width="12" height="8.500" rx="1" fill="#f4f4f4" /><path d="M3.500 5.500 9 10l5.500-4.500M3.500 13l4-4M14.500 13l-4-4" fill="none" stroke="#93a6bd" strokeWidth=".8" /></>,
  maps: <><rect width="18" height="18" fill="#dfe9df" /><path d="M8 0h10v10z" fill="#56c55f" /><path d="M0 0h6l12 14v4h-4L0 3z" fill="#fff" /><path d="M0 11l7 7H0z" fill="#f3b8d0" /><path d="M11 0l7 7" stroke="#f2c84b" strokeWidth="2" /><circle cx="6.500" cy="10.500" r="4.500" fill="#2f7df0" /><path d="M6.500 7.500l2.200 5-2.200-1.200-2.200 1.200z" fill="#fff" /></>,
  photos: <><rect width="18" height="18" fill="#fafafa" />{['#f6a327', '#f0d22e', '#9bcf3f', '#44b98a', '#4f8fe6', '#8a62d6', '#e0539b', '#ef5a3c'].map((c, i) => <ellipse key={c} cx="9" cy="5" rx="2.300" ry="3.400" fill={c} fillOpacity=".85" transform={`rotate(${i * 45} 9 9)`} />)}</>,
  facetime: <><rect width="18" height="18" fill="#35cf55" /><rect x="3" y="5.500" width="8.500" height="7" rx="1.500" fill="#fff" /><path d="M12 8.300l3.200-2.300v6L12 9.800z" fill="#fff" /></>,
  calendar: <><rect width="18" height="18" fill="#fff" /><rect width="18" height="5" fill="#ee4b45" /><text x="9" y="15.300" fontSize="11" textAnchor="middle" fill="#444" fontFamily="Inter, sans-serif">23</text></>,
  contacts: <><rect width="18" height="18" fill="#9a7440" /><circle cx="9" cy="9" r="4.500" fill="none" stroke="#7c5a2d" /><circle cx="9" cy="8" r="1.700" fill="#7c5a2d" /><path d="M6 12c.5-3 5.500-3 6 0z" fill="#7c5a2d" /></>,
  reminders: <><rect width="18" height="18" fill="#fff" /><circle cx="3.700" cy="4.500" r="1.400" fill="#3a8ff0" /><circle cx="3.700" cy="9" r="1.400" fill="#ef5044" /><circle cx="3.700" cy="13.500" r="1.400" fill="#f5a32c" /><path d="M7 4.500h9M7 9h9M7 13.500h9" stroke="#ccc" strokeWidth=".9" /></>,
  notes: <><rect width="18" height="18" fill="#fbf8ef" /><rect width="18" height="5" fill="#f9cf3f" /><path d="M2 9h14M2 13h14" stroke="#ddd6c8" strokeWidth=".8" /></>,
  freeform: <><rect width="18" height="18" fill="#fff" /><circle cx="6" cy="11.500" r="4.500" fill="#f0604a" /><rect x="7" y="3" width="8.500" height="8" rx="1.500" fill="#58b8ee" /><path d="M2.500 9c4-6 5-5 4 0s1 4 4-1 4-3 3 2" fill="none" stroke="#1e2f5c" strokeWidth="1.200" /></>,
  tv: <><rect width="18" height="18" fill="#1f2522" /><circle cx="5" cy="9.500" r="2.100" fill="#fff" /><path d="M5 7q0-1.500 1.300-1.800Q6.300 6.600 5 7" fill="#fff" /><text x="12" y="12" fontSize="7.500" textAnchor="middle" fill="#fff" fontFamily="Inter, sans-serif">tv</text></>,
  music: <><rect width="18" height="18" fill="#fa3c55" /><path d="M7 13V5l6-1.300v7.800" fill="none" stroke="#fff" strokeWidth="1.300" /><ellipse cx="5.600" cy="13" rx="1.900" ry="1.500" fill="#fff" /><ellipse cx="11.600" cy="11.700" rx="1.900" ry="1.500" fill="#fff" /></>,
  store: <><rect width="18" height="18" fill="#2492f3" /><path d="M10 3.500 5 13.500M8 3.500l5 10M3 11h7M12.500 11H15" stroke="#fff" strokeWidth="1.500" strokeLinecap="round" /></>,
  settings: <><rect width="18" height="18" fill="#8d9092" /><circle cx="9" cy="9" r="7" fill="#4a4d50" /><circle cx="9" cy="9" r="5" fill="none" stroke="#b8babc" /><path d="M9 9h5M9 9 6.500 4.700M9 9l-2.500 4.300" stroke="#b8babc" /><circle cx="9" cy="9" r="1.800" fill="#2d2f31" stroke="#b8babc" strokeWidth=".8" /></>,
  word: <><rect width="18" height="18" fill="#fff" /><rect x="6" y="3" width="10" height="12" rx="1" fill="#2f86dd" /><path d="M6 9h10v5a1 1 0 0 1-1 1H6z" fill="#1857b0" /><rect x="2" y="5.500" width="7.500" height="7" fill="#174ea6" /><text x="5.700" y="11.200" fontSize="6" fontWeight="700" textAnchor="middle" fill="#fff" fontFamily="Inter, sans-serif">W</text></>,
  ppt: <><rect width="18" height="18" fill="#fff" /><circle cx="10" cy="9" r="6.300" fill="#ee6f4f" /><path d="M10 9h6.300A6.300 6.300 0 0 1 4 11z" fill="#c9401f" /><rect x="2" y="5.500" width="7.500" height="7" fill="#c0391b" /><text x="5.700" y="11.200" fontSize="6" fontWeight="700" textAnchor="middle" fill="#fff" fontFamily="Inter, sans-serif">P</text></>,
  line: <><rect width="18" height="18" fill="#0bc30f" /><ellipse cx="9" cy="8.300" rx="6.500" ry="5.300" fill="#fff" /><path d="M8 13v3l4.500-3.500z" fill="#fff" /><text x="9" y="9.800" fontSize="4" fontWeight="700" textAnchor="middle" fill="#0bb30f" fontFamily="Inter, sans-serif">LINE</text></>,
  bookmark: <><rect width="18" height="18" fill="#3aa6ee" /><path d="M5 0h8v12l-4-2.500L5 12z" fill="#f2f5f8" /></>,
  youtube: <><rect width="18" height="18" fill="#e83434" /><rect x="2" y="3.500" width="14" height="11" rx="3" fill="#f01c1c" /><path d="M7.300 6.300v5.400L12 9z" fill="#fff" /></>,
  netflix: <><rect width="18" height="18" fill="#fff" /><path d="M4.500 2.500h3v13h-3zM10.500 2.500h3v13h-3z" fill="#b1060f" /><path d="M4.500 2.500h3l6 13h-3z" fill="#e8121d" /></>,
  terminal: <><rect width="18" height="18" fill="#25272a" /><path d="M3 4l1.700 1.200L3 6.400M5.500 6.800H8" fill="none" stroke="#ddd" strokeWidth=".8" /></>,
  chrome: <><rect width="18" height="18" fill="#fff" /><circle cx="9" cy="9" r="7.500" fill="#f9c524" /><path d="M9 9 2.500 5.250A7.500 7.500 0 0 1 15.500 5.250H9z" fill="#e8453a" /><path d="M9 9 2.500 5.250A7.500 7.500 0 0 0 9 16.500z" fill="#35a853" /><circle cx="9" cy="9" r="3.700" fill="#fff" /><circle cx="9" cy="9" r="2.900" fill="#4285f4" /></>,
  editor: <><rect width="18" height="18" fill="#f3f3f3" /><path d="M1 5h16M1 9h16M1 13h16" stroke="#dcdcdc" /><path d="M15.500 0 10 12l-2 5 4-4L17.500 1z" fill="#8aa6bb" stroke="#5f7788" strokeWidth=".6" /></>,
  onigiri: <><rect width="18" height="18" fill="#e9eae8" /><path d="M9 2.500 2.500 11v4h13v-4z" fill="#fff" stroke="#8b8f8c" strokeWidth=".8" /><path d="M9 4 3 9M9 4l6 5" stroke="#777" /><rect x="6" y="11" width="6.500" height="5" rx=".8" fill="#31483b" /></>,
  preview: <><rect width="18" height="18" fill="#f0f2f4" /><rect x="1" y="1.500" width="16" height="9" fill="#82b4ee" /><path d="M1 10.500h16v4H1z" fill="#33507f" /><path d="M9 11h8v5H9z" fill="#2c2c2c" /><circle cx="12" cy="15" r="2" fill="#999" /></>,
  docs: <><path d="M4 0h9l5 5v11H4z" fill="#f3f3f3" /><path d="M13 0v5h5z" fill="#c9c9c9" /><path d="M0 5h14v8H0z" fill="#1d2b45" /><path d="M4 9h4" stroke="#fff" /></>,
  trash: <><path d="M2 2h14l-2 16H4z" fill="#d9dadb" /><ellipse cx="9" cy="2.500" rx="7" ry="2" fill="#7d7a79" /><path d="M6 5l1 12M12 5l-1 12M9 5v12" stroke="#b6b8ba" /><path d="M5 2l3-1.500 3 1.500 2-1" stroke="#eee" fill="none" /></>,
};

function DockIcon({ name, running }) {
  const bare = name === 'docs' || name === 'trash';
  return (
    <div className="flex w-[24.460px] shrink-0 flex-col items-center">
      <svg width="18.500" height="18.500" viewBox="0 0 18 18" className={bare ? '' : 'rounded-[4.200px]'}>{APPS[name]}</svg>
      {running && <i className="mt-[4.500px] size-[2.500px] rounded-full bg-[#1d100c]" />}
    </div>
  );
}

function Dock() {
  const names = Object.keys(APPS);
  const on = ['finder', 'ppt', 'chrome'];
  return (
    <div className="flex h-[31px] w-[760px] items-start rounded-[6px] bg-[#a16a5a] pl-[2.200px] pt-[4px]">
      {names.slice(0, 25).map((n) => <DockIcon key={n} name={n} running={on.includes(n)} />)}
      <div className="flex w-[11px] shrink-0 justify-center"><i className="h-[22px] w-px bg-[#774a3e]" /></div>
      {names.slice(25, 28).map((n) => <DockIcon key={n} name={n} />)}
      <div className="flex w-[11px] shrink-0 justify-center"><i className="h-[22px] w-px bg-[#774a3e]" /></div>
      {names.slice(28).map((n) => <DockIcon key={n} name={n} />)}
    </div>
  );
}

function Rock() {
  return (
    <svg width="1080" height="50" viewBox="0 0 1080 50" className="absolute bottom-0 left-0">
      <defs>
        <linearGradient id="rock" x1="0" x2="1" y1="0" y2="0">
          <stop offset="0" stopColor="#7a2f12" /><stop offset=".2" stopColor="#8a3c1a" /><stop offset=".88" stopColor="#5a2715" /><stop offset="1" stopColor="#4a2012" />
        </linearGradient>
        <filter id="grain" x="0" y="0" width="100%" height="100%" colorInterpolationFilters="sRGB">
          <feTurbulence type="fractalNoise" baseFrequency=".07 .14" numOctaves="4" seed="7" />
          <feColorMatrix values="0 0 0 0 .14  0 0 0 0 .05  0 0 0 0 .03  4 0 0 0 -1.600" />
        </filter>
      </defs>
      <rect width="1080" height="50" fill="url(#rock)" />
      <rect width="1080" height="50" filter="url(#grain)" opacity=".8" />
    </svg>
  );
}

export default function App() {
  return (
    <div className="h-[754px] w-[1242px] overflow-hidden bg-[#1b1e1f] pl-[80px] pt-[24px] font-['Inter','Noto_Sans_CJK_TC',sans-serif]">
      <div className="relative flex h-[696px] w-[1080px] flex-col overflow-hidden bg-[#4f98c1]">
        <Rock />
        <MenuBar />
        <div className="relative mt-px flex h-[635px] shrink-0 flex-col overflow-hidden rounded-[10px] bg-[#f3f3f4]">
          <TitleBar />
          <Tabs />
          <Ribbon />
          <div className="flex min-h-0 flex-1">
            <SlidePane />
            <div className="w-[2px] shrink-0 bg-[#f8f6f5]" />
            <div className="flex min-w-0 flex-1 flex-col border-l border-[#d5d5d5] bg-[#e9e9ea]">
              <div className="h-[441px] shrink-0 border-b border-[#cfcfcf] bg-[#e7e7e8] pl-[59px] pt-[21px]">
                <div className="h-[399px] w-[709px] shadow-[0_0_3px_rgba(0,0,0,.18)]"><ContainerSlide selected /></div>
              </div>
              <div className="flex-1 bg-[#ececec] pl-[6px] pt-[7px] text-[11px] leading-[12px] text-[#444]">按一下以新增備忘稿</div>
            </div>
          </div>
          <StatusBar />
        </div>
        <div className="relative mt-[2px] flex pl-[160px]"><Dock /></div>
        <SharePopup />
      </div>
    </div>
  );
}
